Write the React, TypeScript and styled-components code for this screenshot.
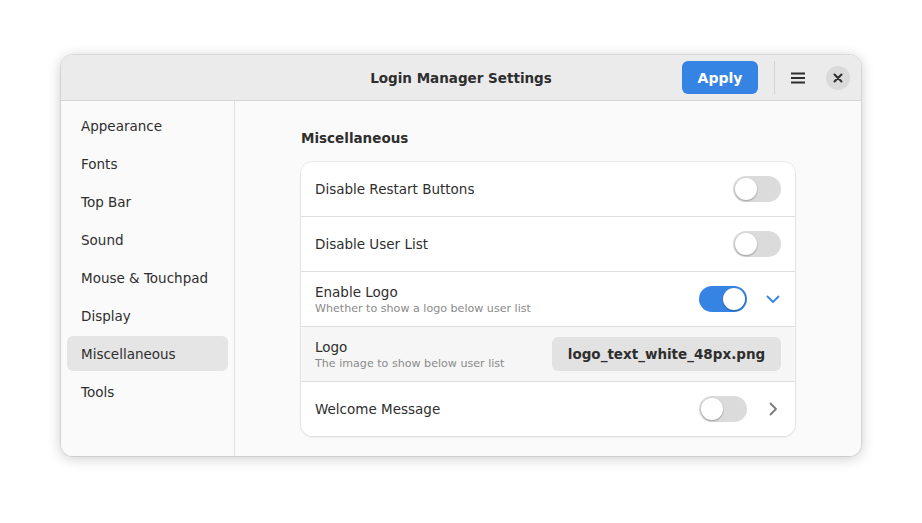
import React from "react";
import styled, { createGlobalStyle } from "styled-components";

const GlobalStyle = createGlobalStyle`
  html, body {
    margin: 0;
    padding: 0;
    background: #ffffff;
  }
  body {
    font-family: "DejaVu Sans", "Noto Sans", sans-serif;
    color: #2e2e2e;
  }
`;

const Page = styled.div`
  width: 922px;
  height: 523px;
  box-sizing: border-box;
  padding-top: 55px;
  display: flex;
  justify-content: center;
  align-items: flex-start;
`;

const Window = styled.div`
  width: 800px;
  height: 401px;
  border-radius: 12px;
  overflow: hidden;
  display: flex;
  flex-direction: column;
  background: #fafafa;
  box-shadow: 0 0 0 1px rgba(0, 0, 0, 0.08), 0 2px 14px rgba(0, 0, 0, 0.22);
`;

const HeaderBar = styled.div`
  height: 46px;
  flex-shrink: 0;
  box-sizing: border-box;
  background: #ebebeb;
  border-bottom: 1px solid #d4d4d4;
  display: flex;
  align-items: center;
  padding: 0 11px 0 6px;
  position: relative;
`;

const Title = styled.div`
  position: absolute;
  left: 0;
  right: 0;
  text-align: center;
  font-size: 13.5px;
  font-weight: bold;
  color: #2e2e2e;
  pointer-events: none;
`;

const HeaderEnd = styled.div`
  margin-left: auto;
  display: flex;
  align-items: center;
  gap: 16px;
`;

const ApplyButton = styled.button`
  width: 76px;
  height: 33px;
  border: none;
  border-radius: 6px;
  background: #3584e4;
  color: #ffffff;
  font-family: inherit;
  font-size: 14px;
  font-weight: bold;
`;

const Separator = styled.div`
  width: 1px;
  height: 33px;
  background: #d2d2d2;
  margin-right: -5px;
`;

const IconButton = styled.div<{ $round?: boolean }>`
  width: 24px;
  height: 24px;
  border-radius: 50%;
  background: ${(p) => (p.$round ? "#dadada" : "transparent")};
  display: flex;
  align-items: center;
  justify-content: center;
  color: #2e2e2e;
`;

const Body = styled.div`
  flex: 1;
  display: flex;
  min-height: 0;
`;

const Sidebar = styled.div`
  width: 174px;
  flex-shrink: 0;
  box-sizing: border-box;
  border-right: 1px solid #dedede;
  background: #fafafa;
  padding: 7px 6px 6px 6px;
  display: flex;
  flex-direction: column;
  gap: 3px;
`;

const NavItem = styled.div<{ $active?: boolean }>`
  height: 35px;
  flex-shrink: 0;
  display: flex;
  align-items: center;
  padding-left: 14px;
  border-radius: 6px;
  font-size: 13.5px;
  color: #2e2e2e;
  background: ${(p) => (p.$active ? "#e5e5e5" : "transparent")};
`;

const Content = styled.div`
  flex: 1;
  padding: 27px 66px 0;
  background: #fafafa;
`;

const SectionHeading = styled.div`
  font-size: 13.5px;
  font-weight: bold;
  color: #2e2e2e;
  height: 20px;
  line-height: 20px;
  margin-bottom: 14px;
`;

const Card = styled.div`
  background: #ffffff;
  border-radius: 12px;
  overflow: hidden;
  box-shadow: 0 0 0 1px rgba(0, 0, 0, 0.05), 0 1px 3px rgba(0, 0, 0, 0.09);
`;

const Row = styled.div<{ $sub?: boolean }>`
  height: 54px;
  box-sizing: border-box;
  display: flex;
  align-items: center;
  padding: 0 14px;
  background: ${(p) => (p.$sub ? "#f6f6f6" : "#ffffff")};
  & + & {
    height: 55px;
    border-top: 1px solid #dedede;
  }
`;

const Labels = styled.div`
  flex: 1;
  display: flex;
  flex-direction: column;
  gap: 2px;
`;

const RowTitle = styled.div`
  font-size: 13.5px;
  color: #2e2e2e;
`;

const RowSubtitle = styled.div`
  font-size: 11.1px;
  color: #8a8a8a;
`;

const Track = styled.div<{ $on?: boolean }>`
  width: 48px;
  height: 26px;
  border-radius: 13px;
  background: ${(p) => (p.$on ? "#3584e4" : "#dbdbdb")};
  display: flex;
  align-items: center;
  justify-content: ${(p) => (p.$on ? "flex-end" : "flex-start")};
  padding: 0 2px;
  box-sizing: border-box;
  flex-shrink: 0;
`;

const Knob = styled.div`
  width: 22px;
  height: 22px;
  border-radius: 50%;
  background: #ffffff;
  box-shadow: 0 1px 2px rgba(0, 0, 0, 0.3);
`;

const Suffix = styled.div<{ $accent?: boolean }>`
  width: 16px;
  height: 16px;
  margin-left: 18px;
  display: flex;
  align-items: center;
  justify-content: center;
  color: ${(p) => (p.$accent ? "#3584e4" : "#7a7a7a")};
`;

const FileButton = styled.div`
  width: 229px;
  height: 34px;
  border-radius: 6px;
  background: #e2e2e2;
  display: flex;
  align-items: center;
  justify-content: center;
  font-size: 13.5px;
  font-weight: bold;
  color: #2e2e2e;
`;

const Switch = ({ on }: { on?: boolean }) => (
  <Track $on={on}>
    <Knob />
  </Track>
);

const navItems = [
  "Appearance",
  "Fonts",
  "Top Bar",
  "Sound",
  "Mouse & Touchpad",
  "Display",
  "Miscellaneous",
  "Tools",
];

export default function App() {
  return (
    <>
      <GlobalStyle />
      <Page>
        <Window>
          <HeaderBar>
            <Title>Login Manager Settings</Title>
            <HeaderEnd>
              <ApplyButton>Apply</ApplyButton>
              <Separator />
              <IconButton>
                <svg width="16" height="16" viewBox="0 0 16 16">
                  <rect x="1" y="2.5" width="14" height="2" fill="currentColor" />
                  <rect x="1" y="7" width="14" height="2" fill="currentColor" />
                  <rect x="1" y="11.5" width="14" height="2" fill="currentColor" />
                </svg>
              </IconButton>
              <IconButton $round>
                <svg width="10" height="10" viewBox="0 0 10 10">
                  <path
                    d="M1.5 1.5 L8.5 8.5 M8.5 1.5 L1.5 8.5"
                    stroke="currentColor"
                    strokeWidth="2"
                    strokeLinecap="round"
                  />
                </svg>
              </IconButton>
            </HeaderEnd>
          </HeaderBar>
          <Body>
            <Sidebar>
              {navItems.map((n) => (
                <NavItem key={n} $active={n === "Miscellaneous"}>
                  {n}
                </NavItem>
              ))}
            </Sidebar>
            <Content>
              <SectionHeading>Miscellaneous</SectionHeading>
              <Card>
                <Row>
                  <Labels>
                    <RowTitle>Disable Restart Buttons</RowTitle>
                  </Labels>
                  <Switch />
                </Row>
                <Row>
                  <Labels>
                    <RowTitle>Disable User List</RowTitle>
                  </Labels>
                  <Switch />
                </Row>
                <Row>
                  <Labels>
                    <RowTitle>Enable Logo</RowTitle>
                    <RowSubtitle>Whether to show a logo below user list</RowSubtitle>
                  </Labels>
                  <Switch on />
                  <Suffix $accent>
                    <svg width="16" height="16" viewBox="0 0 16 16">
                      <path
                        d="M2.5 5.5 L8 11 L13.5 5.5"
                        fill="none"
                        stroke="currentColor"
                        strokeWidth="1.8"
                        strokeLinecap="round"
                        strokeLinejoin="round"
                      />
                    </svg>
                  </Suffix>
                </Row>
                <Row $sub>
                  <Labels>
                    <RowTitle>Logo</RowTitle>
                    <RowSubtitle>The image to show below user list</RowSubtitle>
                  </Labels>
                  <FileButton>logo_text_white_48px.png</FileButton>
                </Row>
                <Row>
                  <Labels>
                    <RowTitle>Welcome Message</RowTitle>
                  </Labels>
                  <Switch />
                  <Suffix>
                    <svg width="16" height="16" viewBox="0 0 16 16">
                      <path
                        d="M5.5 2.5 L11 8 L5.5 13.5"
                        fill="none"
                        stroke="currentColor"
                        strokeWidth="1.8"
                        strokeLinecap="round"
                        strokeLinejoin="round"
                      />
                    </svg>
                  </Suffix>
                </Row>
              </Card>
            </Content>
          </Body>
        </Window>
      </Page>
    </>
  );
}
